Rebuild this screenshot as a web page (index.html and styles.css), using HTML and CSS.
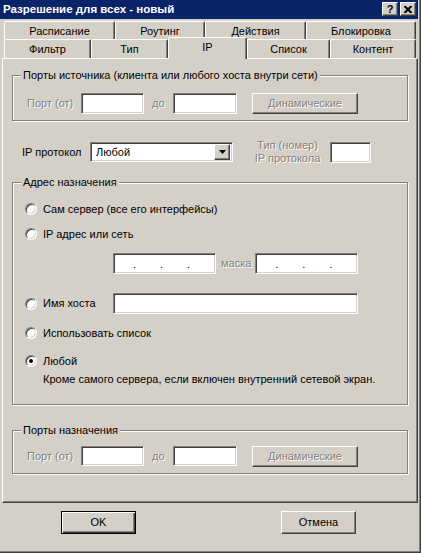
FILE: index.html
```html
<!DOCTYPE html>
<html lang="ru">

<head>
    <meta charset="UTF-8">
    <meta name="viewport" content="width=device-width, initial-scale=1.0">
    <title>Разрешение для всех - новый</title>
    <link rel="stylesheet" href="styles.css">
</head>

<body>
    <div class="window">
        <div class="titlebar">
            <span class="title">Разрешение для всех - новый</span>
            <span class="caption-btn help">?</span>
            <span class="caption-btn close">
                <svg width="8" height="7" viewBox="0 0 8 7">
                    <path d="M0 0h2l2 2l2-2h2v1l-2.5 2.5l2.5 2.5v1h-2l-2-2l-2 2h-2v-1l2.5-2.5l-2.5-2.5z" fill="#000"/>
                </svg>
            </span>
        </div>

        <div class="tabs">
            <div class="tab-row back">
                <div class="tab">Расписание</div>
                <div class="tab">Роутинг</div>
                <div class="tab">Действия</div>
                <div class="tab">Блокировка</div>
            </div>
            <div class="tab-row front">
                <div class="tab">Фильтр</div>
                <div class="tab">Тип</div>
                <div class="tab active">IP</div>
                <div class="tab">Список</div>
                <div class="tab">Контент</div>
            </div>
        </div>

        <div class="panel">
            <!-- source ports -->
            <div class="group src">
                <div class="group-title">Порты источника (клиента или любого хоста внутри сети)</div>
                <div class="port-row">
                    <span class="lbl disabled port-lbl">Порт (от)</span>
                    <span class="edit port-from"></span>
                    <span class="lbl disabled to-lbl">до</span>
                    <span class="edit port-to"></span>
                    <span class="btn disabled dyn">Динамические</span>
                </div>
            </div>

            <!-- protocol -->
            <div class="proto-row">
                <span class="lbl proto-lbl">IP протокол</span>
                <div class="edit select">
                    <span class="select-value">Любой</span>
                    <span class="btn drop">
                        <svg width="7" height="4" viewBox="0 0 7 4"><path d="M0 0h7l-3.5 4z" fill="#000"/></svg>
                    </span>
                </div>
                <span class="lbl disabled proto-num">Тип (номер)<br>IP протокола</span>
                <span class="edit proto-input"></span>
            </div>

            <!-- destination -->
            <div class="group dest">
                <div class="group-title">Адрес назначения</div>
                <div class="opt opt-self"><span class="radio"></span>Сам сервер (все его интерфейсы)</div>
                <div class="opt opt-net"><span class="radio"></span>IP адрес или сеть</div>
                <div class="ip-row">
                    <span class="edit ip"><i>.</i><i>.</i><i>.</i></span>
                    <span class="lbl disabled mask-lbl">маска</span>
                    <span class="edit ip"><i>.</i><i>.</i><i>.</i></span>
                </div>
                <div class="opt opt-host">
                    <span class="radio"></span><span class="host-lbl">Имя хоста</span>
                    <span class="edit host"></span>
                </div>
                <div class="opt opt-list"><span class="radio"></span>Использовать список</div>
                <div class="opt opt-any"><span class="radio checked"></span>Любой</div>
                <div class="note">Кроме самого сервера, если включен внутренний сетевой экран.</div>
            </div>

            <!-- destination ports -->
            <div class="group dst-ports">
                <div class="group-title">Порты назначения</div>
                <div class="port-row">
                    <span class="lbl disabled port-lbl">Порт (от)</span>
                    <span class="edit port-from"></span>
                    <span class="lbl disabled to-lbl">до</span>
                    <span class="edit port-to"></span>
                    <span class="btn disabled dyn">Динамические</span>
                </div>
            </div>
        </div>

        <div class="footer">
            <span class="btn default ok">OK</span>
            <span class="btn cancel">Отмена</span>
        </div>
    </div>
</body>

</html>
```

FILE: styles.css
```css
* {
    box-sizing: border-box;
}

body {
    margin: 0;
    background-color: #d4d0c8;
    font-family: "Liberation Sans", Arial, sans-serif;
    font-size: 11px;
    line-height: 13px;
    color: #000;
}

.window {
    width: 421px;
    height: 553px;
    background-color: #d4d0c8;
    border-right: 1px solid #404040;
    border-bottom: 1px solid #404040;
    box-shadow: inset -1px -1px 0 #808080;
    overflow: hidden;
}

/* title bar */
.titlebar {
    display: flex;
    align-items: center;
    width: 418px;
    height: 19px;
    padding: 0 2px 1px 3px;
    background-color: #0a246a;
    color: #fff;
}

.title {
    flex: 1;
    font-weight: bold;
    font-size: 11.5px;
}

.caption-btn {
    display: flex;
    align-items: center;
    justify-content: center;
    width: 16px;
    height: 14px;
    background-color: #d4d0c8;
    color: #000;
    border: 1px solid;
    border-color: #fff #404040 #404040 #fff;
    box-shadow: inset -1px -1px 0 #808080;
    font-weight: bold;
    font-size: 11px;
}

.caption-btn.close {
    margin-left: 2px;
}

/* tabs */
.tabs {
    padding: 2px 0 0 4px;
}

.tab-row {
    display: flex;
}

.tab-row.back {
    height: 18px;
}

.tab-row.front {
    height: 19px;
}

.tab {
    display: flex;
    align-items: center;
    justify-content: center;
    height: 100%;
    padding-top: 1px;
    border: 1px solid;
    border-bottom: none;
    border-color: #fff #404040 #fff #fff;
    border-radius: 2px 2px 0 0;
    box-shadow: inset -1px 0 0 #808080;
    background-color: #d4d0c8;
}

.back .tab:nth-child(1) { width: 111px; }
.back .tab:nth-child(2) { width: 90px; }
.back .tab:nth-child(3) { width: 101px; }
.back .tab:nth-child(4) { width: 110px; }

.front .tab:nth-child(1) { width: 87px; }
.front .tab:nth-child(2) { width: 77px; }
.front .tab:nth-child(3) { width: 79px; }
.front .tab:nth-child(4) { width: 83px; }
.front .tab:nth-child(5) { width: 86px; }

.tab.active {
    position: relative;
    z-index: 1;
    height: 22px;
    margin-top: -2px;
    align-items: flex-start;
    padding-top: 3px;
}

/* main page */
.panel {
    width: 416px;
    height: 445px;
    margin-left: 2px;
    padding: 0 9px;
    border: 1px solid;
    border-color: #fff #404040 #404040 #fff;
    box-shadow: inset -1px -1px 0 #808080;
}

.group {
    width: 396px;
    border: 1px solid #808080;
    box-shadow: inset 1px 1px 0 #fff, 1px 1px 0 #fff;
}

.group-title {
    width: fit-content;
    margin: -7px 0 0 8px;
    padding: 0 2px;
    background-color: #d4d0c8;
}

.group.src {
    margin-top: 16px;
    padding-bottom: 6px;
}

.group.dest {
    margin-top: 17px;
    padding: 0 0 18px 12px;
}

.group.dest .group-title {
    margin-left: -4px;
}

.group.dst-ports {
    margin-top: 25px;
    padding-bottom: 7px;
}

.lbl {
    white-space: nowrap;
}

.disabled {
    color: #808080;
    text-shadow: 1px 1px 0 #fff;
}

.edit {
    display: block;
    background-color: #fff;
    border: 1px solid;
    border-color: #808080 #fff #fff #808080;
    box-shadow: inset 1px 1px 0 #404040, inset -1px -1px 0 #d4d0c8;
}

.btn {
    display: flex;
    align-items: center;
    justify-content: center;
    background-color: #d4d0c8;
    border: 1px solid;
    border-color: #fff #404040 #404040 #fff;
    box-shadow: inset -1px -1px 0 #808080;
}

/* port rows */
.port-row {
    display: flex;
    align-items: center;
    height: 21px;
    margin-top: 11px;
    padding-left: 14px;
}

.dst-ports .port-row {
    height: 20px;
    margin-top: 9px;
}

.port-lbl {
    width: 54px;
}

.port-from {
    width: 63px;
    height: 100%;
}

.to-lbl {
    width: 21px;
    margin-left: 8px;
}

.port-to {
    width: 64px;
    height: 100%;
}

.dyn {
    width: 106px;
    height: 21px;
    margin-left: 15px;
}

/* protocol row */
.proto-row {
    display: flex;
    align-items: center;
    height: 26px;
    margin-top: 18px;
    padding-left: 10px;
}

.proto-lbl {
    width: 68px;
}

.select {
    display: flex;
    align-items: center;
    width: 143px;
    height: 20px;
    padding: 2px;
}

.select-value {
    flex: 1;
    padding-left: 3px;
}

.drop {
    width: 16px;
    height: 16px;
}

.proto-num {
    width: 85px;
    margin-left: 12px;
    text-align: center;
    line-height: 13px;
}

.proto-input {
    width: 41px;
    height: 21px;
}

/* destination options */
.opt {
    display: flex;
    align-items: center;
    height: 16px;
}

.radio {
    display: flex;
    align-items: center;
    justify-content: center;
    width: 12px;
    height: 12px;
    margin-right: 6px;
    border-radius: 50%;
    background-color: #fff;
    border: 1px solid;
    border-color: #808080 #fff #fff #808080;
    box-shadow: inset 1px 1px 0 #404040, inset -1px -1px 0 #d4d0c8;
}

.radio.checked::after {
    content: "";
    width: 4px;
    height: 4px;
    border-radius: 50%;
    background-color: #000;
}

.opt-self {
    margin-top: 12px;
}

.opt-net {
    margin-top: 9px;
}

.ip-row {
    display: flex;
    align-items: center;
    height: 21px;
    margin-top: 11px;
    padding-left: 88px;
}

.ip {
    display: flex;
    width: 103px;
    height: 100%;
    padding: 4px 0 0 19px;
}

.ip i {
    width: 27px;
    font-style: normal;
}

.mask-lbl {
    margin: 0 4px 0 5px;
}

.opt-host {
    height: 21px;
    margin-top: 19px;
}

.host-lbl {
    width: 70px;
}

.host {
    width: 245px;
    height: 21px;
}

.opt-list {
    margin-top: 11px;
}

.opt-any {
    margin-top: 12px;
}

.note {
    margin: 4px 0 0 18px;
}

/* dialog buttons */
.footer {
    display: flex;
    margin-top: 8px;
}

.footer .btn {
    width: 75px;
    height: 23px;
}

.ok {
    margin-left: 61px;
}

.btn.default {
    border-color: #000;
    box-shadow: inset 1px 1px 0 #fff, inset -1px -1px 0 #404040, inset -2px -2px 0 #808080;
}

.cancel {
    margin-left: 145px;
}
```
